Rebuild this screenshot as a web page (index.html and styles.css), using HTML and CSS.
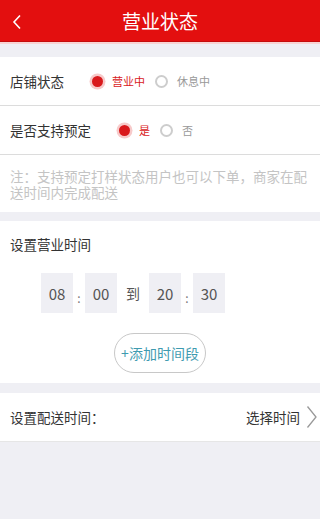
FILE: index.html
```html
<!DOCTYPE html>
<html lang="zh">
<head>
<meta charset="utf-8">
<link rel="stylesheet" href="styles.css">
</head>
<body>
<header class="bar">
  <svg class="back" width="12" height="16" viewBox="0 0 12 16"><path d="M9 1.5 L3 8 L9 14.5" fill="none" stroke="#fff" stroke-width="1.6"/></svg>
  <h1 class="title">营业状态</h1>
</header>

<section class="card first">
  <div class="row">
    <span class="label">店铺状态</span>
    <span class="radio on"></span><span class="opt on-txt">营业中</span>
    <span class="radio"></span><span class="opt">休息中</span>
  </div>
  <div class="row">
    <span class="label">是否支持预定</span>
    <span class="radio on"></span><span class="opt on-txt">是</span>
    <span class="radio"></span><span class="opt">否</span>
  </div>
  <p class="note">注：支持预定打样状态用户也可以下单，商家在配送时间内完成配送</p>
</section>

<section class="card hours">
  <div class="sub">设置营业时间</div>
  <div class="times">
    <span class="box">08</span><span class="colon">:</span><span class="box">00</span>
    <span class="to">到</span>
    <span class="box">20</span><span class="colon">:</span><span class="box">30</span>
  </div>
  <div class="add-wrap"><span class="add">+添加时间段</span></div>
</section>

<section class="card deliver">
  <span class="label">设置配送时间：</span>
  <span class="pick">选择时间</span>
  <svg class="chev" width="12" height="24" viewBox="0 0 12 24"><path d="M1.5 1.5 L10 12 L1.5 22.5" fill="none" stroke="#999" stroke-width="1.3"/></svg>
</section>
</body>
</html>
```

FILE: styles.css
```css
* { box-sizing: border-box; }
html, body {
  margin: 0;
  padding: 0;
  background: #efeff4;
  font-family: "Noto Sans CJK SC", "Noto Sans", sans-serif;
  color: #333;
}
body { width: 320px; height: 519px; overflow: hidden; }

.bar {
  height: 42px;
  background: #e30f0f;
  border-bottom: 1px solid #c40c0c;
  box-shadow: 0 2px 0 #f8d3d3;
  display: flex;
  align-items: center;
  justify-content: center;
  position: relative;
}
.back { position: absolute; left: 11px; top: 14px; }
.title {
  margin: 0;
  font-size: 19px;
  font-weight: normal;
  color: #fff;
  line-height: 1;
}

.card { background: #fff; }
.first { margin-top: 15px; }

.row {
  height: 49px;
  border-bottom: 1px solid #dcdcdc;
  display: flex;
  align-items: center;
  padding-left: 10px;
}
.label { font-size: 13.5px; color: #333; }
.row .label { width: 82px; }
.row:nth-child(2) .label { width: 109px; }

.radio {
  width: 13px;
  height: 13px;
  border-radius: 50%;
  border: 2px solid #cdcdcd;
  margin-right: 9px;
  flex: none;
}
.radio.on {
  border: none;
  background: #d9191c;
  box-shadow: 0 0 0 2.5px #f7caca;
  width: 11px;
  height: 11px;
  margin-right: 6px;
}
.opt { font-size: 11px; color: #999; margin-right: 10px; }
.opt.on-txt { color: #d9191c; margin-right: 10px; margin-left: 3px; }

.note {
  margin: 0;
  padding: 13px 10px 12px;
  font-size: 13.5px;
  line-height: 16px;
  color: #c4c4c4;
}

.hours { margin-top: 9px; padding: 13px 0 10px; }
.sub { padding-left: 10px; font-size: 13.5px; line-height: 20px; }
.times {
  display: flex;
  align-items: center;
  padding-left: 41px;
  margin-top: 19px;
  height: 40px;
}
.box {
  width: 32px;
  height: 40px;
  background: #efeff4;
  display: flex;
  align-items: center;
  justify-content: center;
  font-size: 15px;
  color: #555;
}
.colon {
  width: 12px;
  text-align: center;
  font-size: 12px;
  color: #777;
  padding-top: 8px;
}
.to {
  width: 32px;
  text-align: center;
  font-size: 14px;
  color: #555;
}
.add-wrap { display: flex; justify-content: center; margin-top: 20px; }
.add {
  width: 92px;
  height: 40px;
  border: 1px solid #c8c8c8;
  border-radius: 20px;
  display: flex;
  align-items: center;
  justify-content: center;
  font-size: 14px;
  color: #3f9bb0;
}

.deliver {
  margin-top: 10px;
  height: 49px;
  display: flex;
  align-items: center;
  padding: 0 2px 0 10px;
  border-bottom: 1px solid #e6e6e6;
}
.deliver .label { flex: 1; }
.pick { font-size: 13.5px; color: #333; margin-right: 6px; }
```
